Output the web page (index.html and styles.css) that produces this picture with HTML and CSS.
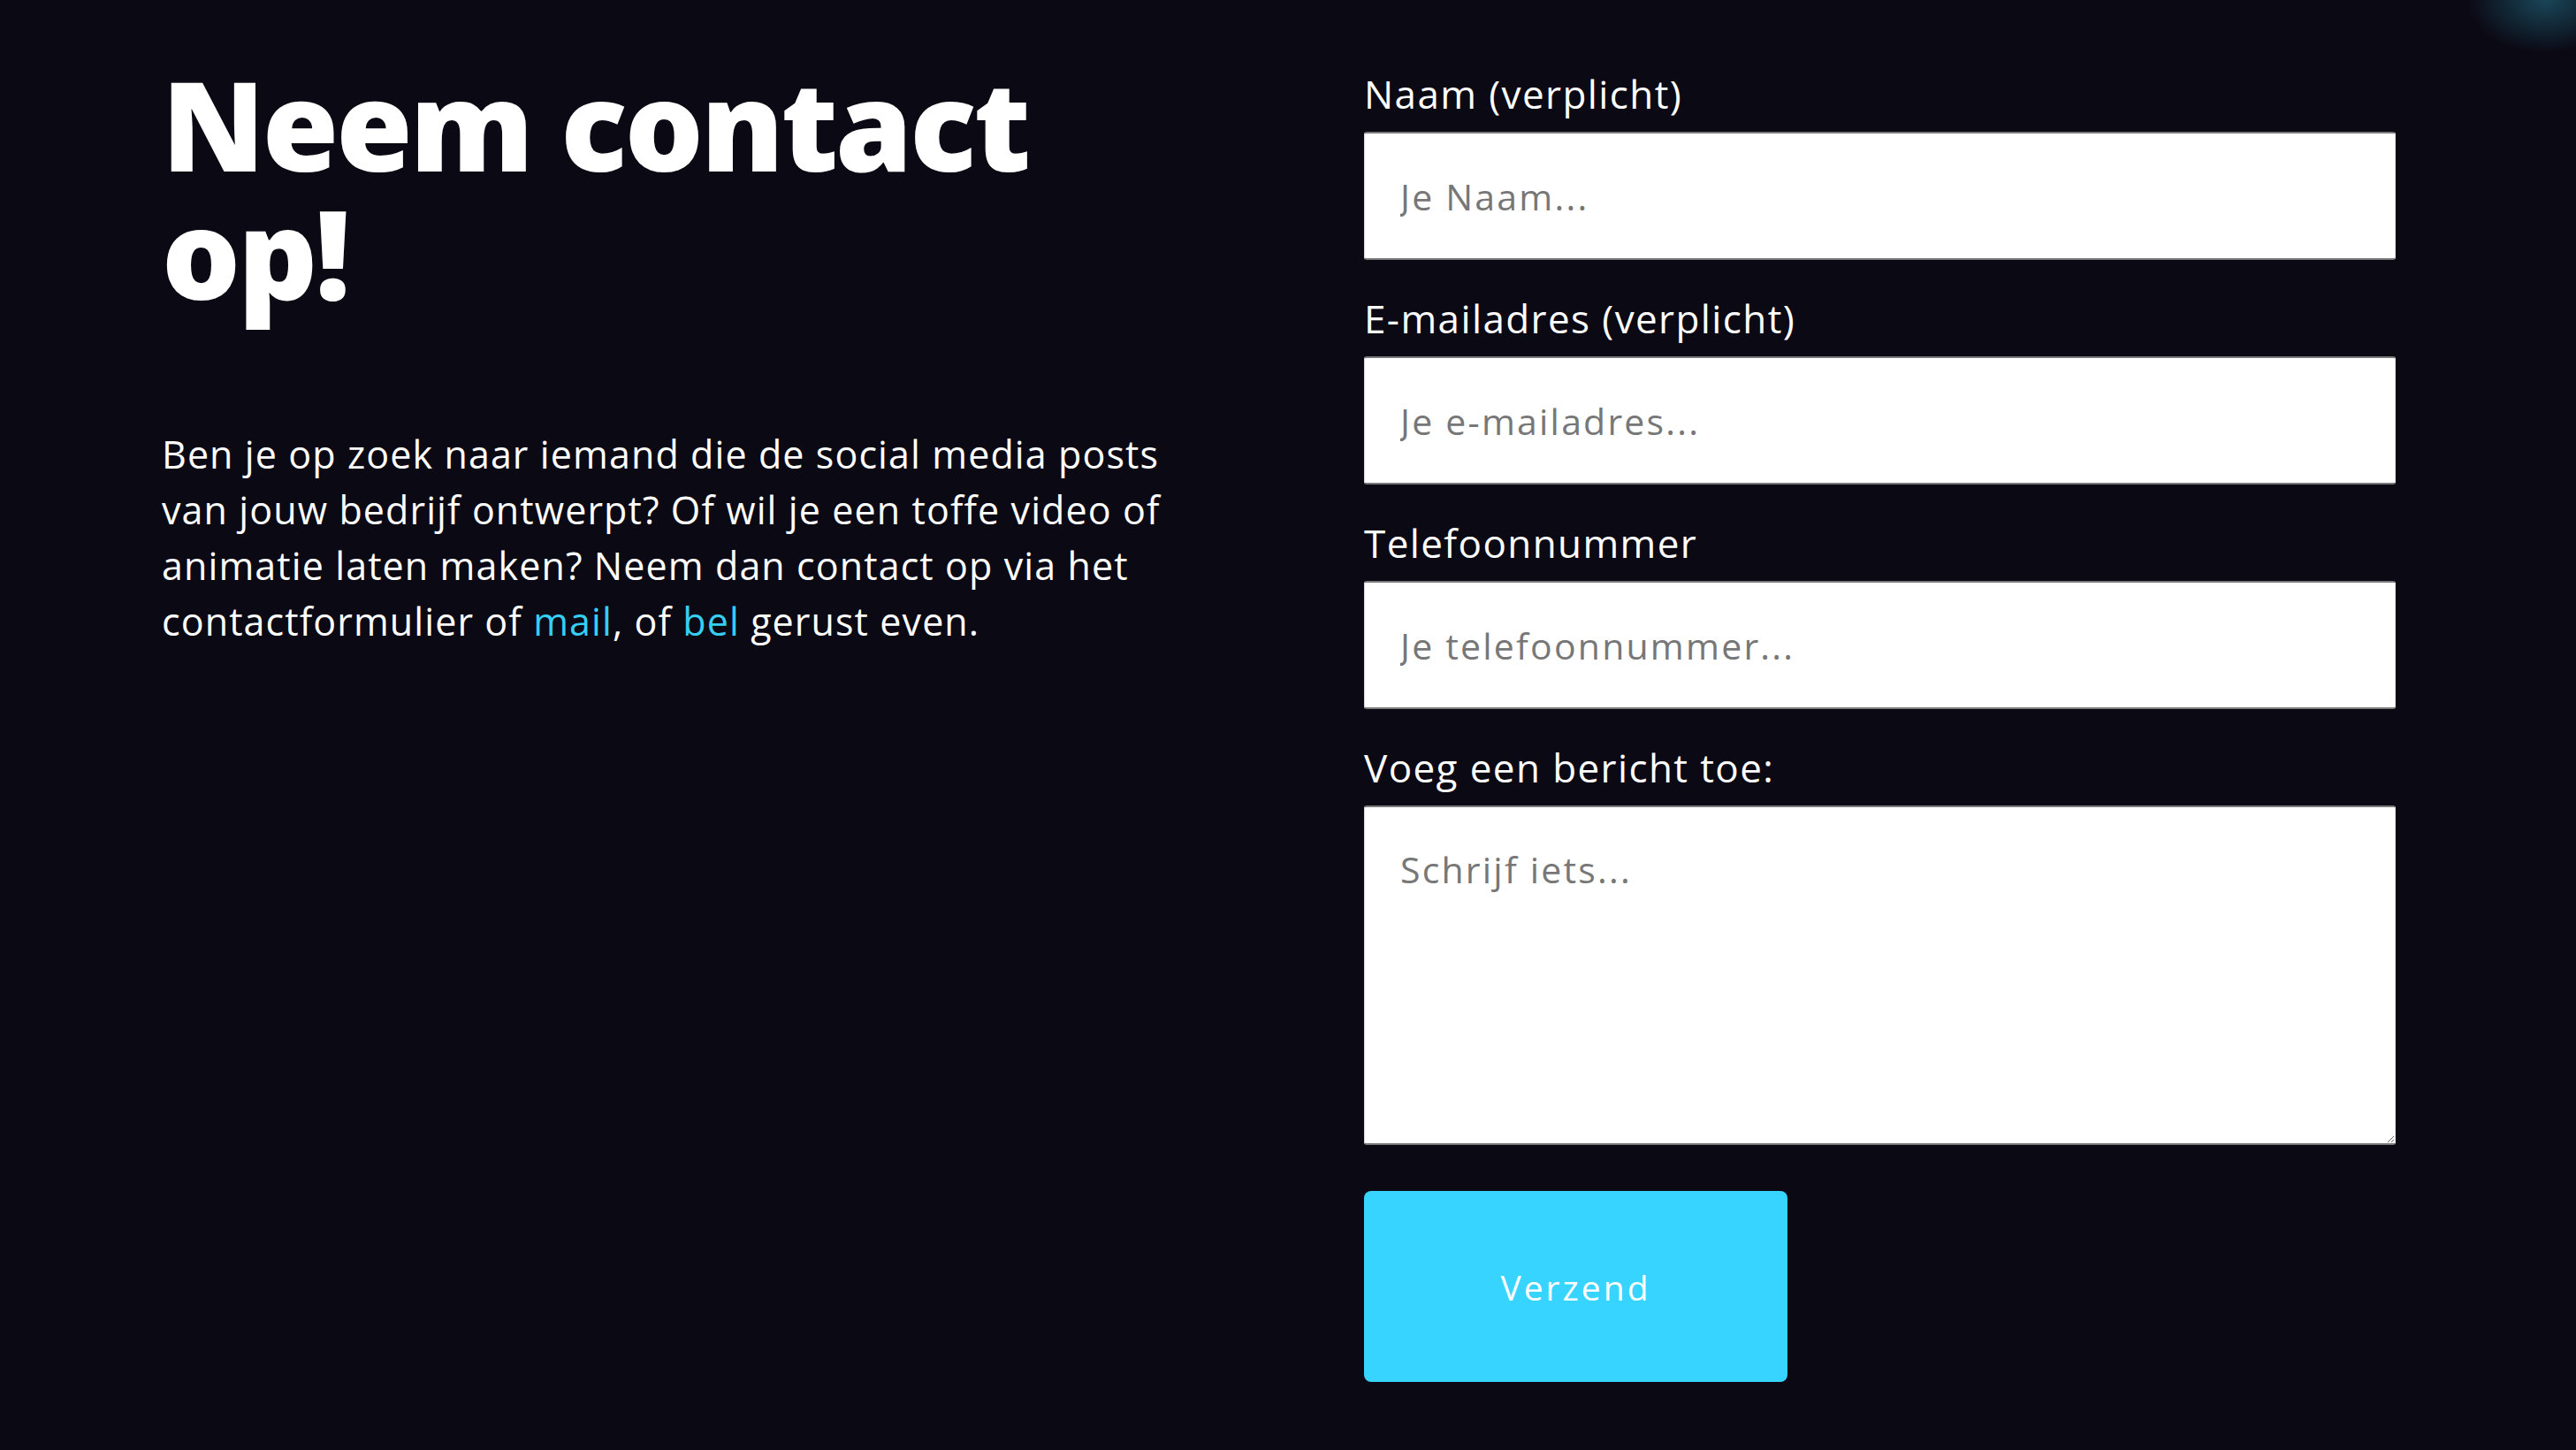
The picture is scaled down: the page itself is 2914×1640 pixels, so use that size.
FILE: index.html
```html
<!DOCTYPE html>
<html lang="nl">
<head>
<meta charset="utf-8">
<title>Neem contact op!</title>
<link rel="stylesheet" href="styles.css">
</head>
<body>
<main class="contact">
  <section class="intro">
    <h1 class="title">Neem contact op!</h1>
    <p class="lead">Ben je op zoek naar iemand die de social media posts van jouw bedrijf ontwerpt? Of wil je een toffe video of animatie laten maken? Neem dan contact op via het contactformulier of <a href="#" class="link">mail</a>, of <a href="#" class="link">bel</a> gerust even.</p>
  </section>
  <form class="form">
    <div class="field">
      <label class="label" for="naam">Naam (verplicht)</label>
      <input class="input" id="naam" type="text" placeholder="Je Naam...">
    </div>
    <div class="field">
      <label class="label" for="email">E-mailadres (verplicht)</label>
      <input class="input" id="email" type="email" placeholder="Je e-mailadres...">
    </div>
    <div class="field">
      <label class="label" for="tel">Telefoonnummer</label>
      <input class="input" id="tel" type="tel" placeholder="Je telefoonnummer...">
    </div>
    <div class="field">
      <label class="label" for="bericht">Voeg een bericht toe:</label>
      <textarea class="textarea" id="bericht" placeholder="Schrijf iets..."></textarea>
    </div>
    <button class="submit" type="button">Verzend</button>
  </form>
</main>
</body>
</html>
```

FILE: styles.css
```css
html, body {
  margin: 0;
  padding: 0;
}
body {
  width: 2914px;
  height: 1640px;
  overflow: hidden;
  background-color: #0b0914;
  background-image: radial-gradient(ellipse 90px 60px at 2880px 0px, rgba(30, 90, 110, 0.75), rgba(11, 9, 20, 0) 100%);
  font-family: "Open Sans", "Liberation Sans", sans-serif;
  color: #ffffff;
}
.contact {
  display: grid;
  grid-template-columns: 1167px 1167px;
  column-gap: 193px;
  padding-left: 183px;
}
.intro {
  padding-top: 67px;
}
.title {
  margin: 0;
  font-size: 140px;
  line-height: 145px;
  font-weight: 800;
  letter-spacing: -3px;
}
.lead {
  margin: 125px 0 0 0;
  font-size: 43px;
  line-height: 63px;
  font-weight: 400;
  letter-spacing: 1.1px;
}
.link {
  color: #35cff5;
  text-decoration: none;
}
.form {
  padding-top: 76px;
  display: flex;
  flex-direction: column;
}
.field {
  display: flex;
  flex-direction: column;
  margin-bottom: 36px;
}
.label {
  font-size: 44px;
  line-height: 60px;
  letter-spacing: 1.4px;
  margin-bottom: 13px;
}
.input, .textarea {
  box-sizing: border-box;
  width: 100%;
  background: #ffffff;
  border: 1px solid #dcdcdc;
  border-top: 2px solid #7a7a7a;
  border-bottom: 2px solid #7a7a7a;
  border-radius: 3px;
  font-family: "Open Sans", "Liberation Sans", sans-serif;
  font-size: 41px;
  letter-spacing: 2.2px;
  color: #222;
  padding: 0 40px;
  margin: 0;
  outline: none;
}
.input {
  height: 145px;
}
.textarea {
  height: 384px;
  padding-top: 40px;
  line-height: 60px;
  resize: vertical;
}
.input::placeholder, .textarea::placeholder {
  color: #777777;
  opacity: 1;
}
.submit {
  margin-top: 16px;
  width: 479px;
  height: 216px;
  background: #36d4ff;
  border: none;
  border-radius: 8px;
  color: #ffffff;
  font-family: "Open Sans", "Liberation Sans", sans-serif;
  font-size: 39px;
  letter-spacing: 3px;
  cursor: pointer;
}
```
